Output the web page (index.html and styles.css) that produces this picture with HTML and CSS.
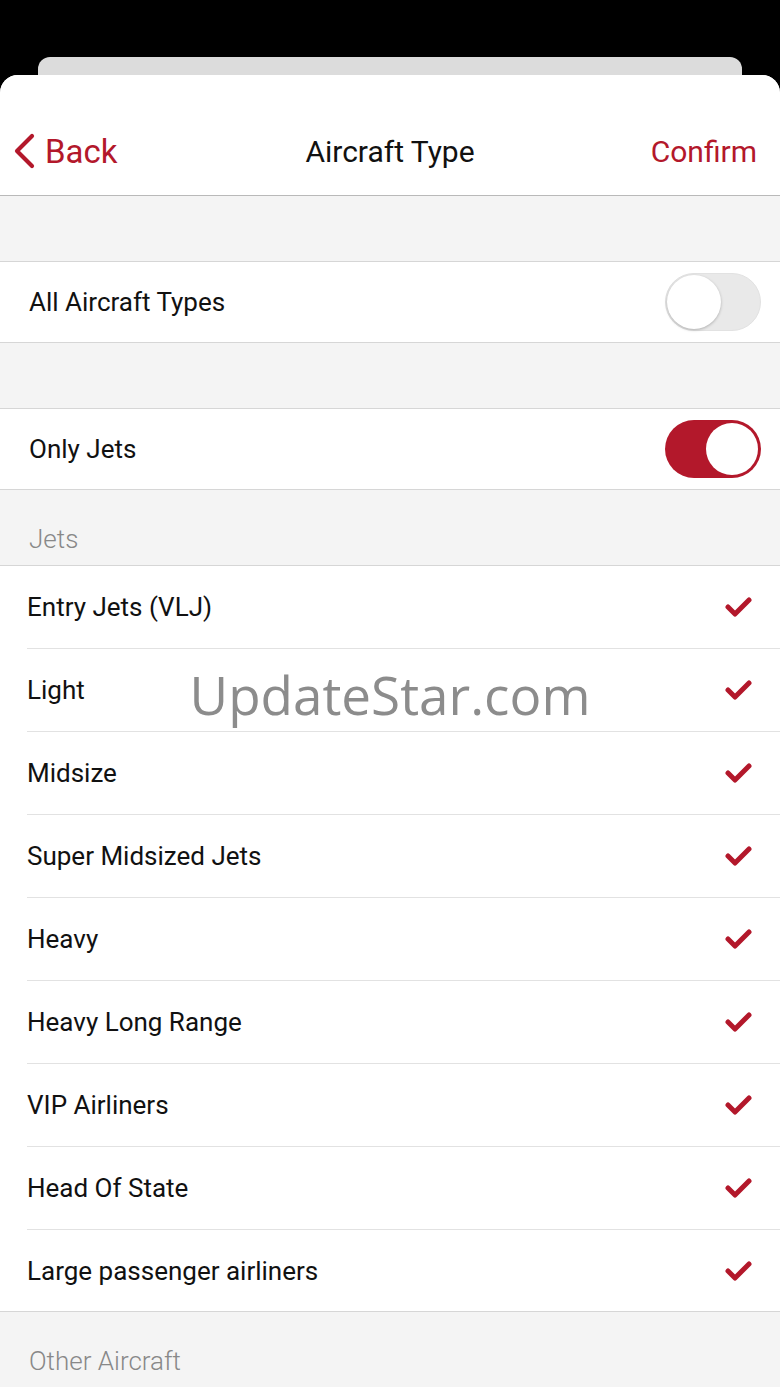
FILE: index.html
```html
<!DOCTYPE html>
<html lang="en">
<head>
<meta charset="UTF-8">
<meta name="viewport" content="width=device-width, initial-scale=1.0">
<link rel="stylesheet" href="styles.css">
<title>Aircraft Type</title>
</head>
<body>

<div class="status-area"></div>
<div class="back-card"></div>

<div class="sheet">
  <div class="nav">
    <div class="nav-back">
      <svg class="chevron" width="24" height="36" viewBox="0 0 24 36">
        <path d="M20 3 L5 18 L20 33" fill="none" stroke="#b3182b" stroke-width="4.2" stroke-linecap="round" stroke-linejoin="round"/>
      </svg>
      <span>Back</span>
    </div>
    <div class="nav-title">Aircraft Type</div>
    <div class="nav-confirm">Confirm</div>
  </div>

  <div class="gap"></div>
  <div class="switch-row">
    <span>All Aircraft Types</span>
    <div class="toggle"><div class="knob"></div></div>
  </div>

  <div class="gap"></div>
  <div class="switch-row">
    <span>Only Jets</span>
    <div class="toggle on"><div class="knob"></div></div>
  </div>

  <div class="section-title">Jets</div>
  <div class="list" id="jets"></div>

  <div class="section-title">Other Aircraft</div>

  <div class="watermark">UpdateStar.com</div>
</div>

<script>
  const jets = [
    'Entry Jets (VLJ)',
    'Light',
    'Midsize',
    'Super Midsized Jets',
    'Heavy',
    'Heavy Long Range',
    'VIP Airliners',
    'Head Of State',
    'Large passenger airliners'
  ];

  const check = '<svg width="28" height="22" viewBox="0 0 28 22">' +
    '<path d="M3 11 L10 18 L24 4" fill="none" stroke="#b3182b" stroke-width="5" stroke-linecap="round" stroke-linejoin="round"/></svg>';

  const list = document.getElementById('jets');
  jets.forEach(function (name) {
    const row = document.createElement('div');
    row.className = 'list-row';
    row.innerHTML = '<span>' + name + '</span>' + check;
    list.appendChild(row);
  });
</script>

</body>
</html>
```

FILE: styles.css
```css
body {
  margin: 0;
  background-color: #000;
  font-family: Roboto, "Noto Sans", sans-serif;
  overflow: hidden;
}
.status-area {
  height: 57px;
}
.back-card {
  height: 18px;
  margin: 0 38px;
  background-color: #dcdcdc;
  border-radius: 12px 12px 0 0;
}
.sheet {
  position: relative;
  background-color: #f4f4f4;
  border-radius: 18px 18px 0 0;
  overflow: hidden;
  min-height: 1320px;
}
.nav {
  display: grid;
  grid-template-columns: 1fr auto 1fr;
  align-items: center;
  height: 121px;
  padding-top: 32px;
  box-sizing: border-box;
  background-color: #fff;
  border-bottom: 1px solid #b9b9b9;
  font-size: 30px;
}
.nav-back {
  display: flex;
  align-items: center;
  color: #b3182b;
  padding-left: 12px;
  font-size: 33px;
}
.nav-back .chevron {
  margin-right: 9px;
}
.nav-title {
  color: #111;
}
.nav-confirm {
  color: #b3182b;
  text-align: right;
  padding-right: 23px;
}
.gap {
  height: 65px;
}
.switch-row {
  display: flex;
  align-items: center;
  justify-content: space-between;
  height: 82px;
  box-sizing: border-box;
  padding: 0 19px 0 29px;
  background-color: #fff;
  border-top: 1px solid #d6d6d6;
  border-bottom: 1px solid #d6d6d6;
  font-size: 26px;
  color: #111;
}
.toggle {
  position: relative;
  width: 96px;
  height: 58px;
  box-sizing: border-box;
  border-radius: 29px;
  background-color: #e9e9e9;
  border: 1px solid #e2e2e2;
}
.toggle .knob {
  position: absolute;
  top: 1px;
  left: 1px;
  width: 54px;
  height: 54px;
  border-radius: 50%;
  background-color: #fff;
  box-shadow: 0 1px 3px rgba(0, 0, 0, 0.25);
}
.toggle.on {
  background-color: #b3182b;
  border: none;
}
.toggle.on .knob {
  top: 3px;
  left: auto;
  right: 3px;
  width: 52px;
  height: 52px;
  box-shadow: none;
}
.section-title {
  height: 75px;
  box-sizing: border-box;
  padding: 34px 0 0 29px;
  font-size: 26px;
  font-weight: 300;
  color: #888;
}
.list {
  background-color: #fff;
  border-top: 1px solid #d6d6d6;
  border-bottom: 1px solid #d6d6d6;
  padding-left: 27px;
}
.list-row {
  display: flex;
  align-items: center;
  justify-content: space-between;
  height: 83px;
  box-sizing: border-box;
  padding-right: 27px;
  border-bottom: 1px solid #e2e2e2;
  font-size: 26px;
  color: #111;
}
.list-row:last-child {
  border-bottom: none;
  height: 81px;
}
.watermark {
  position: absolute;
  top: 583px;
  left: 0;
  right: 0;
  text-align: center;
  font-family: "Open Sans", sans-serif;
  font-size: 53px;
  color: #8c8c8c;
}
```
